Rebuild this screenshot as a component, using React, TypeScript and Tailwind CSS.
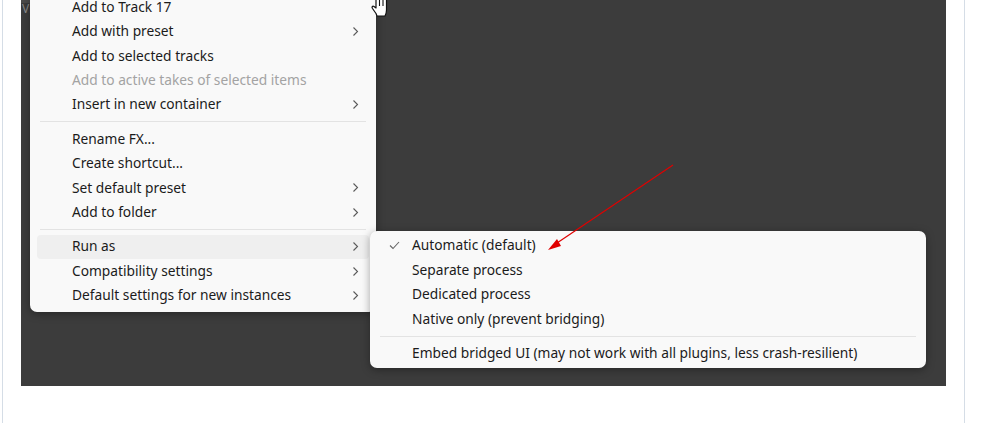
import React from 'react';

type Item = { label: string; sub?: boolean; disabled?: boolean; active?: boolean } | 'sep';

const mainItems: Item[] = [
  { label: 'Add to Track 17' },
  { label: 'Add with preset', sub: true },
  { label: 'Add to selected tracks' },
  { label: 'Add to active takes of selected items', disabled: true },
  { label: 'Insert in new container', sub: true },
  'sep',
  { label: 'Rename FX...' },
  { label: 'Create shortcut...' },
  { label: 'Set default preset', sub: true },
  { label: 'Add to folder', sub: true },
  'sep',
  { label: 'Run as', sub: true, active: true },
  { label: 'Compatibility settings', sub: true },
  { label: 'Default settings for new instances', sub: true },
];

const runAs = [
  { label: 'Automatic (default)', checked: true },
  { label: 'Separate process' },
  { label: 'Dedicated process' },
  { label: 'Native only (prevent bridging)' },
];

function Chevron() {
  return (
    <svg width="7" height="11" viewBox="0 0 7 11" className="shrink-0">
      <path d="M1.5 1.5 L5.5 5.5 L1.5 9.5" fill="none" stroke="#5a5a5a" strokeWidth="1.1" />
    </svg>
  );
}

function Check() {
  return (
    <svg width="11" height="9" viewBox="0 0 11 9">
      <path d="M1 4.5 L4 7.5 L10 1" fill="none" stroke="#666" strokeWidth="1.1" />
    </svg>
  );
}

function Separator() {
  return <div className="mx-[10px] my-[4.5px] h-px bg-[#e3e3e3]" />;
}

function HandCursor() {
  return (
    <svg width="18" height="18" viewBox="0 0 18 18" className="absolute left-[350px] top-0">
      <path
        d="M5 -3 L5 8 L3 6.5 C1.5 5.5 0.5 7 1.5 8.5 L5 13.5 L6 16 L14 16 C15 14 15.5 12 15.5 10 L15.5 -3 Z"
        fill="#fff"
        stroke="#111"
        strokeWidth="1.2"
        strokeLinejoin="round"
      />
      <path d="M8.5 -2 L8.5 6 M12 -2 L12 6" stroke="#111" strokeWidth="1.1" />
    </svg>
  );
}

export default function App() {
  return (
    <div className="h-[423px] w-[990px] overflow-hidden bg-white pl-[2px]" style={{ fontFamily: '"Noto Sans", "Open Sans", sans-serif' }}>
      <div className="h-full w-[963px] border-x border-[#d5dde6] pl-[18px]">
        <div className="relative h-[386px] w-[925px] bg-[#3c3c3c]">
          <div className="h-[3px] w-[9px] bg-[#4b4b4b]" />
          <span className="absolute left-[1px] top-[2px] text-[12px] leading-[14px] text-[#8a8a8a]">Vi</span>

          <div className="absolute left-[9px] top-[-9px] w-[346px] rounded-[7px] bg-[#f9f9f9] py-[4px] shadow-[0_2px_8px_rgba(0,0,0,0.35)]">
            {mainItems.map((it, i) =>
              it === 'sep' ? (
                <Separator key={i} />
              ) : (
                <div
                  key={i}
                  className={`mx-[7px] flex h-[24.4px] items-center justify-between rounded-[4px] pl-[35px] pr-[10px] text-[13.75px] ${
                    it.active ? 'bg-[#efefef]' : ''
                  } ${it.disabled ? 'text-[#a3a3a3]' : 'text-[#1b1b1b]'}`}
                >
                  <span>{it.label}</span>
                  {it.sub && <Chevron />}
                </div>
              ),
            )}
          </div>

          <HandCursor />

          <div className="absolute left-[349px] top-[231px] w-[556px] rounded-[7px] bg-[#f9f9f9] py-[2.5px] shadow-[0_2px_8px_rgba(0,0,0,0.35)]">
            {runAs.map((it) => (
              <div key={it.label} className="mx-[4px] flex h-[24.4px] items-center text-[13.75px] text-[#1b1b1b]">
                <span className="flex w-[38px] justify-center pl-[2px]">{it.checked && <Check />}</span>
                <span>{it.label}</span>
              </div>
            ))}
            <Separator />
            <div className="mx-[4px] flex h-[24.4px] items-center text-[13.75px] text-[#1b1b1b]">
              <span className="w-[38px]" />
              <span>Embed bridged UI (may not work with all plugins, less crash-resilient)</span>
            </div>
          </div>

          <svg width="925" height="386" className="pointer-events-none absolute left-0 top-0">
            <line x1="652" y1="165" x2="536" y2="243" stroke="#e00000" strokeWidth="1.2" />
            <path d="M527 250 L536 239 L540 246 Z" fill="#e00000" />
          </svg>
        </div>
      </div>
    </div>
  );
}
